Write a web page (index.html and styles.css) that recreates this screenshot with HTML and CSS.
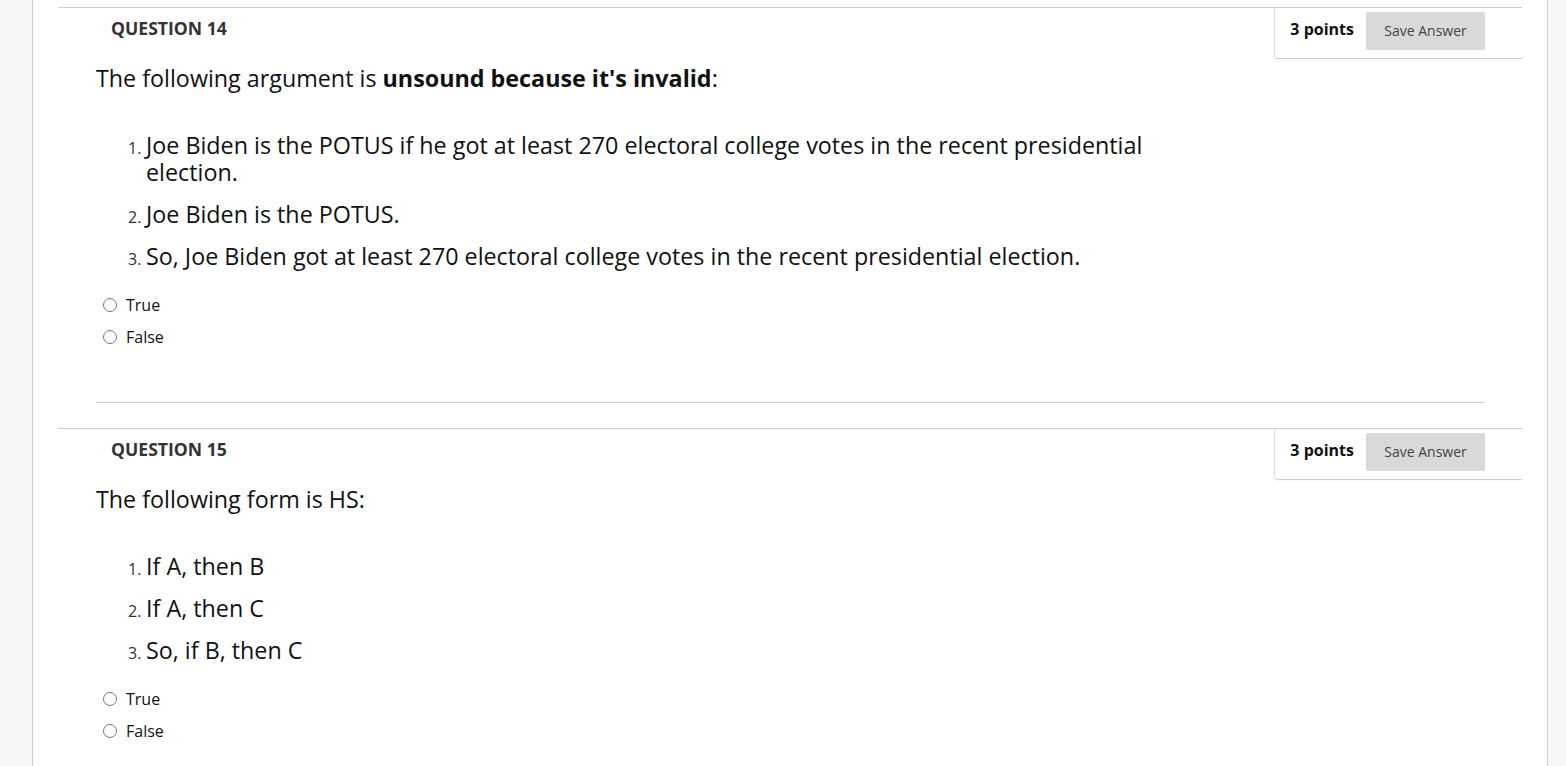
FILE: index.html
```html
<!DOCTYPE html>
<html lang="en">
<head>
<meta charset="utf-8">
<title>Questions</title>
<link rel="stylesheet" href="styles.css">
</head>
<body>
<div class="page">
  <div class="question">
    <div class="q-head">
      <h3 class="q-title">QUESTION 14</h3>
      <div class="points-box">
        <span class="points">3 points</span>
        <button class="save-btn" type="button">Save Answer</button>
      </div>
    </div>
    <div class="q-body">
      <p class="q-text">The following argument is <strong>unsound because it's invalid</strong>:</p>
      <ol class="q-list">
        <li><span>Joe Biden is the POTUS if he got at least 270 electoral college votes in the recent presidential election.</span></li>
        <li><span>Joe Biden is the POTUS.</span></li>
        <li><span>So, Joe Biden got at least 270 electoral college votes in the recent presidential election.</span></li>
      </ol>
      <div class="answers">
        <label class="answer"><span class="radio"></span><span>True</span></label>
        <label class="answer"><span class="radio"></span><span>False</span></label>
      </div>
    </div>
    <hr class="sep">
  </div>
  <div class="question">
    <div class="q-head">
      <h3 class="q-title">QUESTION 15</h3>
      <div class="points-box">
        <span class="points">3 points</span>
        <button class="save-btn" type="button">Save Answer</button>
      </div>
    </div>
    <div class="q-body">
      <p class="q-text">The following form is HS:</p>
      <ol class="q-list">
        <li><span>If A, then B</span></li>
        <li><span>If A, then C</span></li>
        <li><span>So, if B, then C</span></li>
      </ol>
      <div class="answers">
        <label class="answer"><span class="radio"></span><span>True</span></label>
        <label class="answer"><span class="radio"></span><span>False</span></label>
      </div>
    </div>
  </div>
</div>
</body>
</html>
```
FILE: styles.css
```css
html, body {
  margin: 0;
  padding: 0;
  height: 100%;
  overflow: hidden;
}
body {
  background: #f6f6f6;
  font-family: "Open Sans", "DejaVu Sans", sans-serif;
  color: #111;
}
.page {
  margin-left: 32px;
  width: 1516px;
  min-height: 100%;
  background: #fff;
  border-left: 1px solid #cfcfcf;
  border-right: 1px solid #cfcfcf;
  padding-top: 7px;
  box-sizing: border-box;
}
.question {
  margin: 0 25px 25px 25px;
  border-top: 1px solid #cdcdcd;
}
.q-head {
  display: flex;
  justify-content: space-between;
  align-items: flex-start;
}
.q-title {
  margin: 0;
  padding: 10px 0 0 53px;
  font-size: 17.6px;
  line-height: 20px;
  font-weight: 700;
  color: #333;
}
.points-box {
  display: flex;
  align-items: center;
  gap: 12px;
  height: 51px;
  box-sizing: border-box;
  padding: 3px 37px 8px 15px;
  border-left: 1px solid #dedede;
  border-bottom: 1px solid #cfcfcf;
  border-bottom-left-radius: 4px;
  box-shadow: -1px 1px 2px rgba(0,0,0,0.04);
}
.points {
  font-size: 16px;
  font-weight: 700;
  color: #111;
  margin-bottom: 3px;
}
.save-btn {
  width: 119px;
  height: 38px;
  border: none;
  border-radius: 2px;
  background: #d9d9d9;
  font-family: "Open Sans", "DejaVu Sans", sans-serif;
  font-size: 14px;
  color: #444;
  padding: 0;
}
.q-body {
  padding-left: 38px;
}
.q-text {
  margin: 4px 0 0 0;
  font-size: 23.3px;
  line-height: 30px;
}
.q-list {
  list-style: none;
  counter-reset: item;
  margin: 39px 0 0 0;
  padding: 0 340px 0 32px;
}
.q-list li {
  counter-increment: item;
  display: flex;
  align-items: baseline;
  font-size: 16px;
  margin-bottom: 15px;
}
.q-list li:last-child {
  margin-bottom: 0;
}
.q-list li::before {
  content: counter(item) ".";
  flex: 0 0 18px;
  color: #333;
}
.q-list li span {
  font-size: 23.3px;
  line-height: 27px;
}
.answers {
  margin-top: 19px;
  display: flex;
  flex-direction: column;
}
.answer {
  display: flex;
  align-items: center;
  height: 32px;
  font-size: 16px;
  color: #111;
}
.radio {
  width: 14px;
  height: 14px;
  border: 1px solid #767676;
  border-radius: 50%;
  margin: 0 9px 0 7px;
  box-sizing: border-box;
}
.sep {
  margin: 49px 37px 0 38px;
  border: none;
  border-top: 1px solid #cdcdcd;
  height: 0;
}
```
